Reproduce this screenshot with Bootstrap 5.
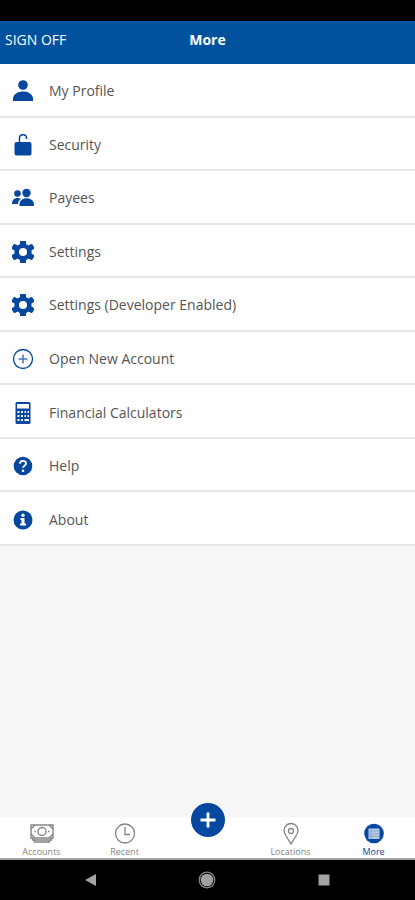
<!DOCTYPE html>
<html lang="en">
<head>
<meta charset="utf-8">
<meta name="viewport" content="width=device-width, initial-scale=1">
<title>More</title>
<link href="https://cdn.jsdelivr.net/npm/bootstrap@5.3.0/dist/css/bootstrap.min.css" rel="stylesheet">
<style>
  :root { --brand: #00529f; --icon: #0647a0; }
  body { font-family: "Open Sans", "Noto Sans", sans-serif; background: #f6f6f6; }
  .status-strip { height: 21px; }
  .app-bar { height: 43px; background: var(--brand); padding: 0 5px 6px; }
  .app-bar a, .app-bar h1 { font-size: 14px; line-height: 20px; }
  .app-bar a { display: block; }
  .menu-list { display: grid; grid-auto-rows: 1fr; min-height: 482px; }
  .menu-list a { border-bottom: 2px solid #e6e6e6; padding: 3px 12px 0; gap: 15px; color: #555; font-size: 14px; line-height: 20px; }
  .menu-list svg { width: 22px; height: 22px; flex: none; color: var(--icon); }
  .tab-bar { height: 43px; border-bottom: 2px solid #a5a5a5; }
  .tab-bar a { color: #858585; font-size: 9px; line-height: 10px; gap: 2px; padding-top: 4px; }
  .tab-bar a.active { color: var(--icon); }
  .tab-bar svg { width: 24px; height: 24px; }
  .add-btn { width: 34px; height: 34px; background: var(--icon); margin-top: -14px; }
  .sys-bar { height: 40px; padding: 0 33px; }
  .sys-bar svg { width: 18px; height: 18px; display: block; margin: 0 auto; }
</style>
<script src="https://cdn.jsdelivr.net/npm/bootstrap@5.3.0/dist/js/bootstrap.bundle.min.js"></script>
</head>
<body class="d-flex flex-column min-vh-100">
<svg class="d-none" aria-hidden="true">
  <symbol id="gear" viewBox="0 0 22 22">
    <g fill="currentColor"><rect x="8" y="-.5" width="6" height="23" rx="1.500"/><rect x="8" y="-1" width="6" height="24" rx="1.500" transform="rotate(60 11 11)"/><rect x="8" y="-1" width="6" height="24" rx="1.500" transform="rotate(120 11 11)"/><circle cx="11" cy="11" r="8.600"/></g>
    <circle cx="11" cy="11" r="4" fill="#fff"/>
  </symbol>
</svg>
<div class="status-strip bg-black"></div>
<header class="app-bar row g-0 align-items-center text-white">
  <div class="col"><a href="#" class="text-white text-decoration-none">SIGN OFF</a></div>
  <h1 class="col-auto m-0 fw-bold">More</h1>
  <div class="col"></div>
</header>
<main class="flex-grow-1">
  <nav class="menu-list bg-white" aria-label="More options">
    <a href="#" class="d-flex align-items-center text-decoration-none">
      <svg viewBox="0 0 22 22" fill="currentColor"><circle cx="11" cy="5" r="4.800"/><path d="M1 21v-2c0-5 5-7.500 10-7.500S21 14 21 19v2z"/></svg>My Profile</a>
    <a href="#" class="d-flex align-items-center text-decoration-none">
      <svg viewBox="0 0 22 22"><rect x="2.500" y="8" width="17" height="13.500" rx="2" fill="currentColor"/><path d="M7.500 9V4C7.500-.3 14.500-.5 14.500 3.500V5" fill="none" stroke="currentColor" stroke-width="1.500"/></svg>Security</a>
    <a href="#" class="d-flex align-items-center text-decoration-none">
      <svg viewBox="0 0 22 22" fill="currentColor"><circle cx="5.500" cy="6.500" r="3.300"/><path d="M0 17c0-4 2-6 6-6 1 0 2 .2 3 .7C7 13 6 15 6 17z"/><circle cx="14.500" cy="6" r="4.200"/><path d="M7.500 19v-1.500c0-4 3-6.300 7-6.300s7.500 2.300 7.500 6.300V19z"/></svg>Payees</a>
    <a href="#" class="d-flex align-items-center text-decoration-none"><svg><use href="#gear"/></svg>Settings</a>
    <a href="#" class="d-flex align-items-center text-decoration-none"><svg><use href="#gear"/></svg>Settings (Developer Enabled)</a>
    <a href="#" class="d-flex align-items-center text-decoration-none">
      <svg viewBox="0 0 22 22" fill="none" stroke="currentColor"><circle cx="11" cy="11" r="9.500" stroke-width="1.300"/><path d="M11 6.500v9M6.500 11h9" stroke-width="1.500" opacity=".75"/></svg>Open New Account</a>
    <a href="#" class="d-flex align-items-center text-decoration-none">
      <svg viewBox="0 0 22 22"><rect x="3.500" y="0" width="15" height="22" rx="1.500" fill="currentColor"/><path fill="#fff" d="M5 2h12v4.500H5zM5.500 9h2v2h-2zM9 9h2v2H9zM12.500 9h1.500v2h-1.500zM15.500 9h1.500v2h-1.500zM5.500 13h2v2h-2zM9 13h2v2H9zM12.500 13h1.500v2h-1.500zM15.500 13h1.500v2h-1.500zM5.500 17h2v2h-2zM9 17h2v2H9zM12.500 17h4.500v2h-4.500z"/></svg>Financial Calculators</a>
    <a href="#" class="d-flex align-items-center text-decoration-none">
      <svg viewBox="0 0 22 22"><circle cx="11" cy="11" r="9.300" fill="currentColor"/><path d="M8 8.700C8 5 14 5 14 8.500c0 2.200-3 2.200-3 4.300" fill="none" stroke="#fff" stroke-width="1.900"/><circle cx="11" cy="15.700" r="1.300" fill="#fff"/></svg>Help</a>
    <a href="#" class="d-flex align-items-center text-decoration-none">
      <svg viewBox="0 0 22 22"><circle cx="11" cy="11" r="9.500" fill="currentColor"/><circle cx="11" cy="6.300" r="1.700" fill="#fff"/><path fill="#fff" d="M8.500 9h4v5.500H14v2H8v-2h1.500V11h-1z"/></svg>About</a>
  </nav>
</main>
<footer>
  <nav class="tab-bar row row-cols-5 g-0 bg-white" aria-label="Main">
    <a href="#" class="d-flex flex-column align-items-center text-decoration-none">
      <svg viewBox="0 0 24 24" fill="none" stroke="currentColor" stroke-width="1.400"><path d="M1 4h22v13H1zM2.500 17v2h19v-2M4.500 19v2h15v-2"/><path d="M1 8 5 4M23 8 19 4M1 13l4 4M23 13l-4 4"/><circle cx="12" cy="10.500" r="4"/><path d="M4.500 10.500H6M18 10.500h1.500"/></svg>Accounts</a>
    <a href="#" class="d-flex flex-column align-items-center text-decoration-none">
      <svg viewBox="0 0 24 24" fill="none" stroke="currentColor" stroke-width="1.300"><circle cx="12" cy="12.500" r="9.500"/><path d="M12 6v7.500h5"/></svg>Recent</a>
    <div class="d-flex justify-content-center">
      <button type="button" class="add-btn btn border-0 rounded-circle p-0 d-flex align-items-center justify-content-center" aria-label="Add">
        <svg viewBox="0 0 24 24" fill="none" stroke="#fff" stroke-width="2.800"><path d="M12 4.500v15M4.500 12h15"/></svg></button>
    </div>
    <a href="#" class="d-flex flex-column align-items-center text-decoration-none">
      <svg viewBox="0 0 24 24" fill="none" stroke="currentColor" stroke-width="1.300"><path d="M12 23C9.500 18 5 13.500 5 9.500a7 7 0 0 1 14 0C19 13.500 14.500 18 12 23z"/><circle cx="12" cy="10" r="2.500"/></svg>Locations</a>
    <a href="#" class="active d-flex flex-column align-items-center text-decoration-none" aria-current="page">
      <svg viewBox="0 0 24 24"><circle cx="12" cy="12.500" r="9.800" fill="currentColor"/><rect x="6.500" y="7.500" width="11" height="10.500" fill="#b4c9e2"/><path d="M6.500 10h11M6.500 12.700h11M6.500 15.300h11M9 7.500V18" stroke="#7fa0cb" stroke-width=".7"/></svg>More</a>
  </nav>
  <div class="sys-bar bg-black row row-cols-3 g-0 align-items-center">
    <div><svg viewBox="0 0 18 18"><path d="M3 9 14 3v12z" fill="#a3a3a3"/></svg></div>
    <div><svg viewBox="0 0 18 18"><circle cx="9" cy="9" r="7.800" fill="none" stroke="#8a8a8a" stroke-width="1.200"/><circle cx="9" cy="9" r="6.300" fill="#a0a0a0"/></svg></div>
    <div><svg viewBox="0 0 18 18"><path d="M3.500 3.500h11v11h-11z" fill="#a3a3a3"/></svg></div>
  </div>
</footer>
</body>
</html>
